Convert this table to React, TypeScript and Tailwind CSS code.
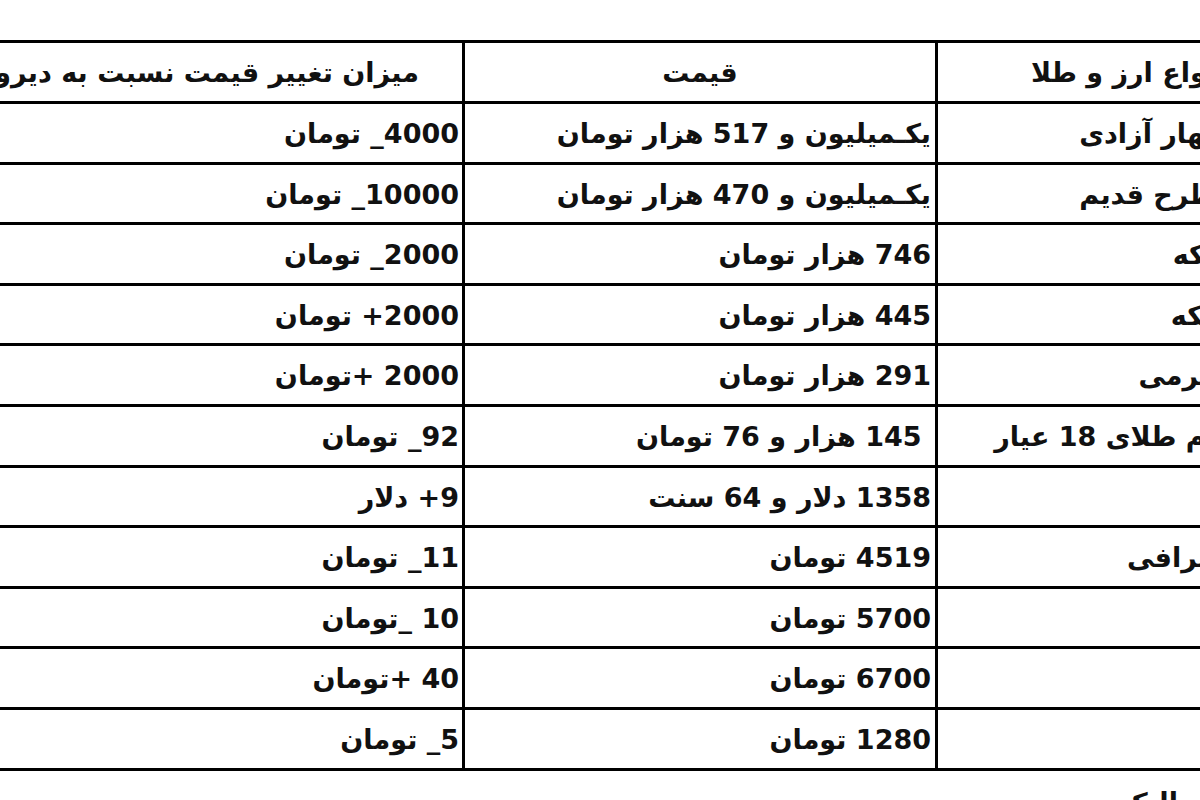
import React from 'react';

type Row = { name: string; price: string; change: string };

const rows: Row[] = [
  { name: 'سکه بهار آزادی', price: 'یکـمیلیون و 517 هزار تومان', change: '4000_ تومان' },
  { name: 'سکه طرح قدیم', price: 'یکـمیلیون و 470 هزار تومان', change: '10000_ تومان' },
  { name: 'نیم سکه', price: '746 هزار تومان', change: '2000_ تومان' },
  { name: 'ربع سکه', price: '445 هزار تومان', change: '2000+ تومان' },
  { name: 'سکه گرمی', price: '291 هزار تومان', change: '2000 +تومان' },
  { name: 'هر گرم طلای 18 عیار', price: '\u00a0145 هزار و 76 تومان', change: '92_ تومان' },
  { name: 'اونس', price: '1358 دلار و 64 سنت', change: '9+ دلار' },
  { name: 'دلار صرافی', price: '4519 تومان', change: '11_ تومان' },
  { name: 'یورو', price: '5700 تومان', change: '10 _تومان' },
  { name: 'پوند', price: '6700 تومان', change: '40 +تومان' },
  { name: 'درهم', price: '1280 تومان', change: '5_ تومان' },
];

export default function App() {
  return (
    <div className="w-[1200px] h-[800px] overflow-hidden bg-white text-[27px] font-bold text-[#111] font-['DejaVu_Sans',sans-serif]">
      <div dir="rtl" className="ml-[-84px] w-[1400px] pt-[40px]">
        <table className="w-[1400px] table-fixed border-collapse">
          <colgroup>
            <col className="w-[378px]" />
            <col className="w-[473px]" />
            <col className="w-[549px]" />
          </colgroup>
          <thead>
            <tr className="h-[61px]">
              <th className="border-[3px] border-black font-bold text-left pl-[93px] pt-[2px] whitespace-nowrap">انواع ارز و طلا</th>
              <th className="border-[3px] border-black font-bold text-center pt-[2px] whitespace-nowrap">قیمت</th>
              <th className="border-[3px] border-black font-bold text-right pr-[43px] pt-[2px] whitespace-nowrap">میزان تغییر قیمت نسبت به دیروز</th>
            </tr>
          </thead>
          <tbody>
            {rows.map((r, i) => (
              <tr key={i} className="h-[60.6px]">
                <td className="border-[3px] border-black text-right pr-[30px] pt-[3px] whitespace-nowrap">{r.name}</td>
                <td className="border-[3px] border-black text-right pr-[4px] pt-[3px] whitespace-nowrap">{r.price}</td>
                <td className="border-[3px] border-black text-right pr-[3px] pt-[3px] whitespace-nowrap">{r.change}</td>
              </tr>
            ))}
          </tbody>
        </table>
        <p className="mt-[12px] pr-[138px] text-right whitespace-nowrap">البک</p>
      </div>
    </div>
  );
}
